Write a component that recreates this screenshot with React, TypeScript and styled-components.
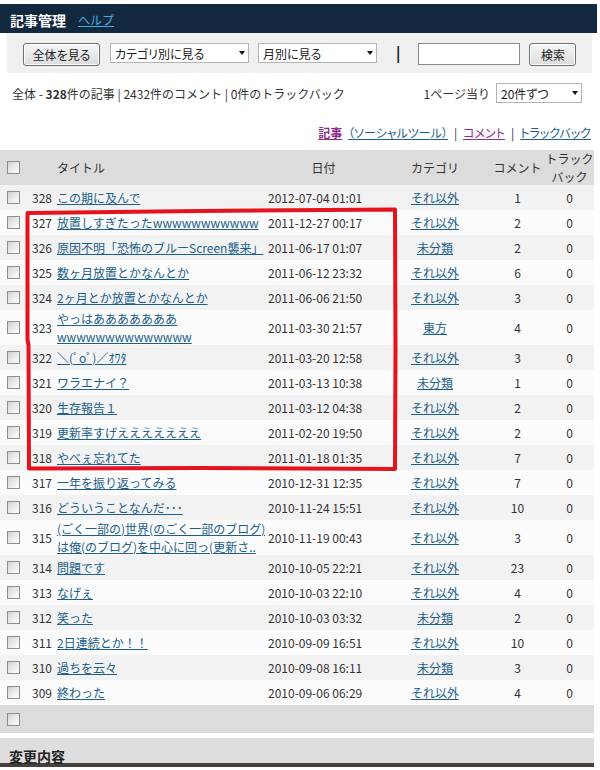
import styled, { createGlobalStyle } from 'styled-components'

const GlobalStyle = createGlobalStyle`
  body {
    margin: 0;
    background: #fff;
    color: #333;
    font-family: "Noto Sans CJK JP", "Noto Sans", sans-serif;
    font-size: 12px;
  }
`

const Page = styled.div`
  width: 597px;
  height: 770px;
  overflow: hidden;
`

const TitleBar = styled.div`
  margin-top: 4px;
  height: 29px;
  box-sizing: border-box;
  padding: 2px 10px 0;
  background: #12283f;
  display: flex;
  align-items: center;
  gap: 12px;
`

const Heading = styled.h1`
  margin: 0;
  font-size: 14px;
  font-weight: bold;
  color: #fff;
`

const HelpLink = styled.a`
  color: #4ba9e2;
  font-size: 12px;
  text-decoration: underline;
`

const Toolbar = styled.div`
  margin: 0 5px 0 7px;
  height: 40px;
  box-sizing: border-box;
  padding: 10px 0 0 16px;
  background: #f0f0f0;
  display: flex;
  align-items: flex-start;
  font-feature-settings: "palt";
`

const Button = styled.button<{ $w: number; $gap?: number }>`
  width: ${p => p.$w}px;
  height: 23px;
  padding: 0;
  font-family: inherit;
  font-size: 12px;
  font-feature-settings: "palt";
  color: #222;
  border: 1px solid #707070;
  border-radius: 3px;
  background: linear-gradient(#f6f6f6, #dcdcdc);
  box-shadow: inset 0 0 0 1px #fbfbfb;
  margin-right: ${p => p.$gap ?? 0}px;
`

const SelectBox = styled.div<{ $w: number; $gap?: number }>`
  position: relative;
  width: ${p => p.$w}px;
  height: 20px;
  margin-right: ${p => p.$gap ?? 0}px;
`

const Select = styled.select`
  appearance: none;
  width: 100%;
  height: 100%;
  box-sizing: border-box;
  border: 1px solid #b4b4b4;
  border-radius: 0;
  background: #fff;
  font-family: inherit;
  font-size: 12px;
  font-feature-settings: "palt";
  color: #222;
  padding: 0 4px;
`

const Caret = styled.span`
  position: absolute;
  right: 4px;
  top: 8px;
  border-left: 3.5px solid transparent;
  border-right: 3.5px solid transparent;
  border-top: 4px solid #111;
  pointer-events: none;
`

const Divider = styled.span`
  font-size: 15px;
  font-weight: bold;
  line-height: 20px;
  color: #111;
  margin: 0 18px 0 19px;
`

const SearchInput = styled.input`
  width: 102px;
  height: 22px;
  box-sizing: border-box;
  border: 1px solid #8a8a8a;
  margin: 0 9px 0 0;
  padding: 0 3px;
`

const Summary = styled.div`
  margin: 10px 15px 0 12px;
  height: 20px;
  display: flex;
  align-items: center;
  justify-content: space-between;
`

const PerPage = styled.div`
  display: flex;
  align-items: center;
  gap: 6px;
`

const Tabs = styled.div`
  margin: 21px 6px 0 0;
  height: 17px;
  display: flex;
  justify-content: flex-end;
  align-items: center;
  gap: 6px;
  font-feature-settings: "palt";
`

const TabLink = styled.a<{ $visited?: boolean; $bold?: boolean }>`
  color: ${p => (p.$visited ? '#8a2f8a' : '#1d5f8c')};
  font-weight: ${p => (p.$bold ? 'bold' : 'normal')};
  text-decoration: underline;
`

const Table = styled.div`
  position: relative;
  width: 594px;
  margin-top: 9px;
`

const Row = styled.div<{ $shade?: boolean }>`
  display: grid;
  grid-template-columns: 27px 29px 211px 113px 110px 55px 49px;
  align-items: center;
  min-height: 25px;
  background: ${p => (p.$shade ? '#f2f2f2' : '#fbfbfb')};
`

const HeadRow = styled(Row)`
  min-height: 35px;
  background: #dcdcdc;
`

const FootRow = styled(Row)`
  min-height: 28px;
  background: #dcdcdc;
`

const Cell = styled.div<{ $align?: 'left' | 'center' | 'right' }>`
  text-align: ${p => p.$align ?? 'left'};
  line-height: 17.5px;
`

const NumCell = styled(Cell)`
  text-align: right;
  padding-right: 4px;
`

const TitleCell = styled(Cell)`
  padding-left: 1px;
`

const DateCell = styled(Cell)`
  padding-left: 1px;
`

const Check = styled.input.attrs({ type: 'checkbox' })`
  appearance: none;
  display: block;
  width: 13px;
  height: 13px;
  margin: 0 0 0 7px;
  box-sizing: border-box;
  border: 1px solid #8e8e8e;
  background: linear-gradient(135deg, #d2d2d2 0%, #ececec 55%, #ffffff 100%);
`

const Link = styled.a`
  color: #1d5f8c;
  text-decoration: underline;
`

const Marker = styled.svg`
  position: absolute;
  left: 0;
  top: 0;
  pointer-events: none;
`

const Section = styled.div`
  margin-top: 5px;
  width: 594px;
  height: 29px;
  box-sizing: border-box;
  padding: 10px 0 0 9px;
  background: #dedede;
  border-bottom: 4px solid #45403b;
  font-size: 14px;
  font-weight: bold;
  line-height: 17px;
  color: #222;
`

interface Entry {
  id: number
  title: string
  date: string
  category: string
  comments: number
}

const entries: Entry[] = [
  { id: 328, title: 'この期に及んで', date: '2012-07-04 01:01', category: 'それ以外', comments: 1 },
  { id: 327, title: '放置しすぎたったwwwwwwwwwww', date: '2011-12-27 00:17', category: 'それ以外', comments: 2 },
  { id: 326, title: '原因不明「恐怖のブルーScreen襲来」', date: '2011-06-17 01:07', category: '未分類', comments: 2 },
  { id: 325, title: '数ヶ月放置とかなんとか', date: '2011-06-12 23:32', category: 'それ以外', comments: 6 },
  { id: 324, title: '2ヶ月とか放置とかなんとか', date: '2011-06-06 21:50', category: 'それ以外', comments: 3 },
  { id: 323, title: 'やっはあああああああwwwwwwwwwwwwww', date: '2011-03-30 21:57', category: '東方', comments: 4 },
  { id: 322, title: '＼(ﾟoﾟ)／ｵﾜﾀ', date: '2011-03-20 12:58', category: 'それ以外', comments: 3 },
  { id: 321, title: 'ワラエナイ？', date: '2011-03-13 10:38', category: '未分類', comments: 1 },
  { id: 320, title: '生存報告１', date: '2011-03-12 04:38', category: 'それ以外', comments: 2 },
  { id: 319, title: '更新率すげえええええええ', date: '2011-02-20 19:50', category: 'それ以外', comments: 2 },
  { id: 318, title: 'やべぇ忘れてた', date: '2011-01-18 01:35', category: 'それ以外', comments: 7 },
  { id: 317, title: '一年を振り返ってみる', date: '2010-12-31 12:35', category: 'それ以外', comments: 7 },
  { id: 316, title: 'どういうことなんだ･･･', date: '2010-11-24 15:51', category: 'それ以外', comments: 10 },
  { id: 315, title: '(ごく一部の)世界(のごく一部のブログ)は俺(のブログ)を中心に回っ(更新さ..', date: '2010-11-19 00:43', category: 'それ以外', comments: 3 },
  { id: 314, title: '問題です', date: '2010-10-05 22:21', category: 'それ以外', comments: 23 },
  { id: 313, title: 'なげぇ', date: '2010-10-03 22:10', category: 'それ以外', comments: 4 },
  { id: 312, title: '笑った', date: '2010-10-03 03:32', category: '未分類', comments: 2 },
  { id: 311, title: '2日連続とか！！', date: '2010-09-09 16:51', category: 'それ以外', comments: 10 },
  { id: 310, title: '過ちを云々', date: '2010-09-08 16:11', category: '未分類', comments: 3 },
  { id: 309, title: '終わった', date: '2010-09-06 06:29', category: 'それ以外', comments: 4 },
]

const App = () => {
  return <Page>
    <GlobalStyle />
    <TitleBar>
      <Heading>記事管理</Heading>
      <HelpLink href="#">ヘルプ</HelpLink>
    </TitleBar>

    <Toolbar>
      <Button $w={77} $gap={10}>全体を見る</Button>
      <SelectBox $w={139} $gap={9}>
        <Select><option>カテゴリ別に見る</option></Select>
        <Caret />
      </SelectBox>
      <SelectBox $w={119}>
        <Select><option>月別に見る</option></Select>
        <Caret />
      </SelectBox>
      <Divider>|</Divider>
      <SearchInput />
      <Button $w={47}>検索</Button>
    </Toolbar>

    <Summary>
      <span>全体 - <b>328</b>件の記事 | 2432件のコメント | 0件のトラックバック</span>
      <PerPage>
        1ページ当り
        <SelectBox $w={86}>
          <Select><option>20件ずつ</option></Select>
          <Caret />
        </SelectBox>
      </PerPage>
    </Summary>

    <Tabs>
      <TabLink href="#" $visited $bold>記事</TabLink>
      <TabLink href="#">（ソーシャルツール）</TabLink>
      <span>|</span>
      <TabLink href="#" $visited>コメント</TabLink>
      <span>|</span>
      <TabLink href="#">トラックバック</TabLink>
    </Tabs>

    <Table>
      <HeadRow>
        <Check />
        <span />
        <TitleCell>タイトル</TitleCell>
        <Cell $align="center">日付</Cell>
        <Cell $align="center">カテゴリ</Cell>
        <Cell $align="center">コメント</Cell>
        <Cell $align="center">トラック<br />バック</Cell>
      </HeadRow>
      {entries.map((e, i) => (
        <Row key={e.id} $shade={i % 2 === 0}>
          <Check />
          <NumCell>{e.id}</NumCell>
          <TitleCell><Link href="#">{e.title}</Link></TitleCell>
          <DateCell>{e.date}</DateCell>
          <Cell $align="center"><Link href="#">{e.category}</Link></Cell>
          <Cell $align="center">{e.comments}</Cell>
          <Cell $align="center">0</Cell>
        </Row>
      ))}
      <FootRow>
        <Check />
      </FootRow>
      <Marker width="594" height="600">
        <path
          d="M27.5 63 L200 61 L395 59.5 L395.5 200 L395 319 L200 318 L29 318.5 L28.5 195 L27.5 190 Z"
          fill="none"
          stroke="#e3141e"
          strokeWidth="4"
          strokeLinejoin="round"
        />
      </Marker>
    </Table>

    <Section>変更内容</Section>
  </Page>
}

export default App
